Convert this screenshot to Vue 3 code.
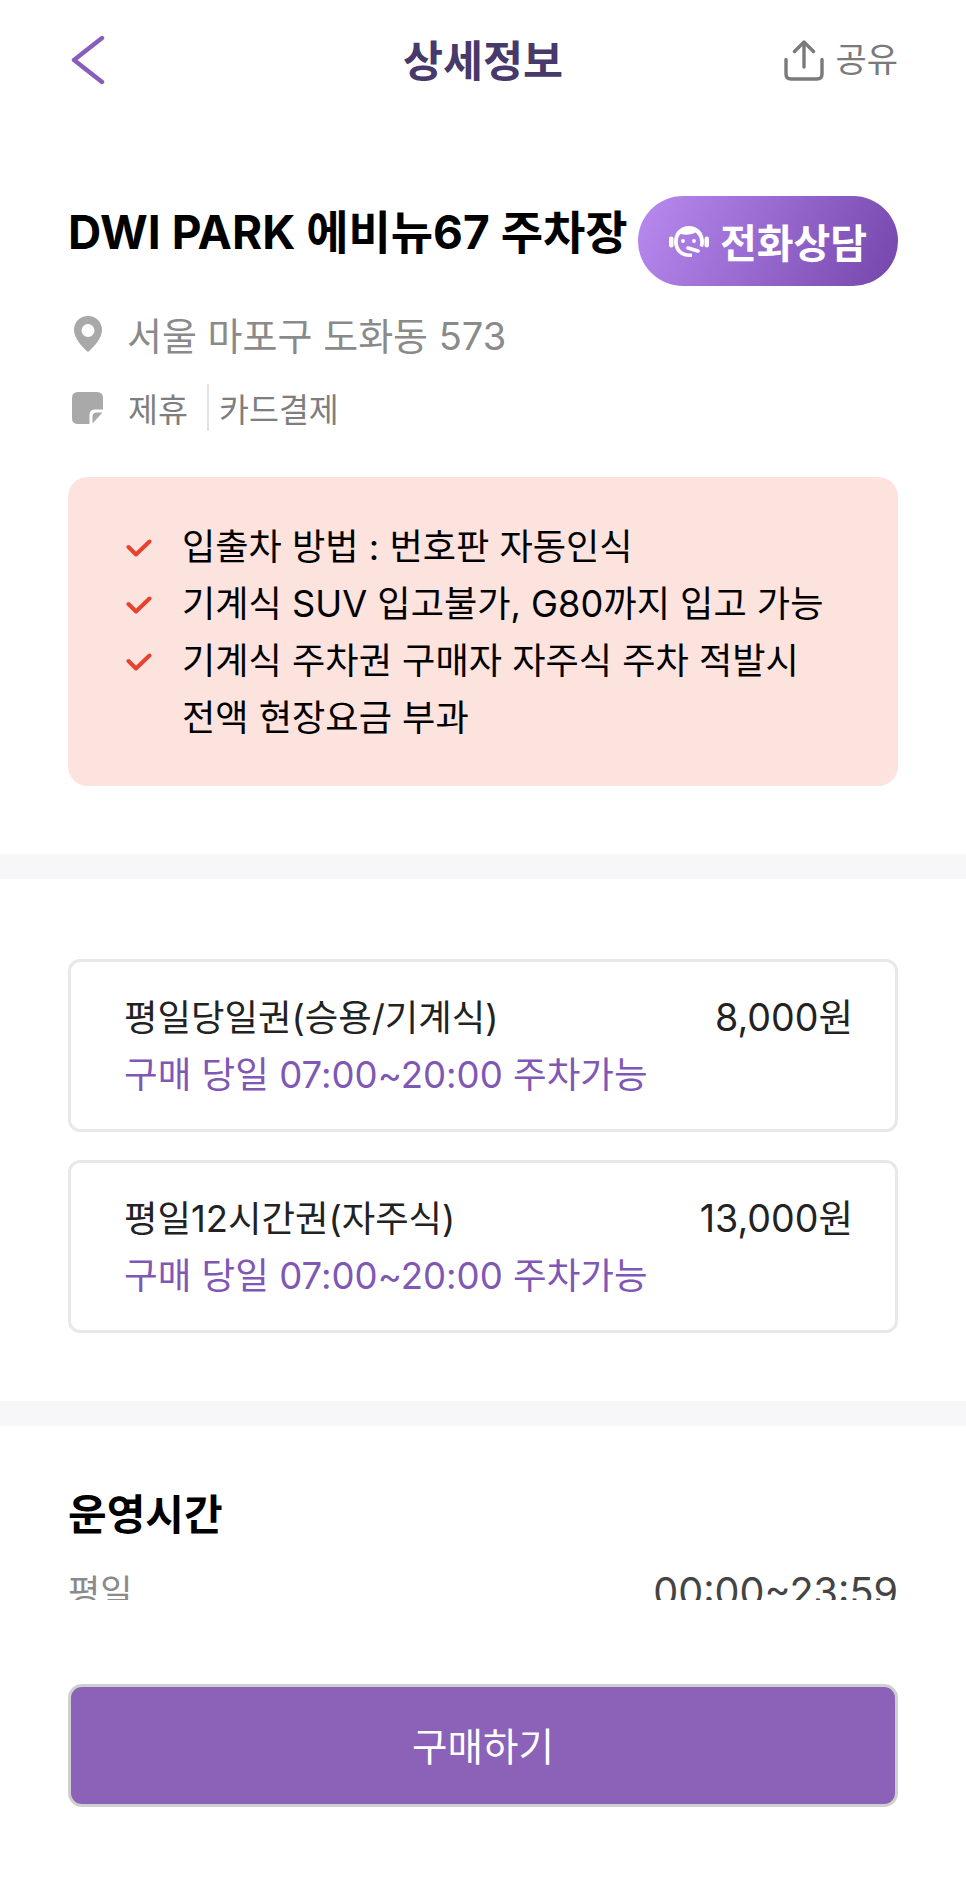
<template>
  <div class="page">
    <header class="top-bar">
      <button class="back-btn" aria-label="뒤로">
        <svg width="36" height="50" viewBox="0 0 36 50" fill="none">
          <path d="M32 3 L4 25 L32 47" stroke="#875cbc" stroke-width="4.4" stroke-linecap="round" stroke-linejoin="round" />
        </svg>
      </button>
      <h1 class="top-title">상세정보</h1>
      <div class="share">
        <svg width="40" height="41" viewBox="0 0 40 41" fill="none">
          <path d="M20 27 V2.5 M10.5 11.5 L20 2 L29.5 11.5" stroke="#7a7a7a" stroke-width="3.4" stroke-linecap="round" stroke-linejoin="round" />
          <path d="M2 19.5 V34 Q2 39 7 39 H33 Q38 39 38 34 V19.5" stroke="#7a7a7a" stroke-width="3.4" stroke-linecap="round" />
        </svg>
        <span>공유</span>
      </div>
    </header>

    <main class="scroll">
      <section class="summary">
        <div class="name-row">
          <h2 class="name">DWI PARK 에비뉴67 주차장</h2>
          <button class="call-btn">
            <svg width="40" height="33" viewBox="0 0 40 33" fill="none">
              <path fill="#fff" fill-rule="evenodd" d="M20 1 C11 1 5 8 5 16.5 C5 25 11 32 20 32 L23 32 L23 28.5 L20 28.5 C13.5 28.5 8.8 23.5 8.8 17 C8.8 13.5 9.5 11 11.5 9 C16 10.4 22 10 26.5 7.6 C29.5 10 31 13 31.2 17 C31.2 19 31 20 30.5 21 L34 22 C34.7 20.4 35 18.5 35 16.5 C35 8 29 1 20 1 Z" />
              <rect x="0" y="11.5" width="4.5" height="11" rx="2.2" fill="#fff" />
              <rect x="35.5" y="11.5" width="4.5" height="11" rx="2.2" fill="#fff" />
              <circle cx="14" cy="16" r="1.9" fill="#fff" />
              <circle cx="25" cy="16" r="1.9" fill="#fff" />
              <path d="M19 23 L29 26" stroke="#fff" stroke-width="3.6" stroke-linecap="round" />
            </svg>
            <span>전화상담</span>
          </button>
        </div>

        <div class="address">
          <svg width="28" height="36" viewBox="0 0 28 36">
            <path fill="#a9a9a9" fill-rule="evenodd" d="M14 0 C6 0 0 6 0 14 C0 22 8 31 14 36 C20 31 28 22 28 14 C28 6 22 0 14 0 Z M14 8 A6.5 6.5 0 1 1 14 21 A6.5 6.5 0 0 1 14 8 Z" />
          </svg>
          <span>서울 마포구 도화동 573</span>
        </div>

        <div class="tags">
          <svg width="32" height="32" viewBox="0 0 32 32">
            <path fill="#a9a9a9" d="M6 0 H25 Q31 0 31 6 V17.5 H23 Q17.5 17.5 17.5 23 V32 H6 Q0 32 0 26 V6 Q0 0 6 0 Z" />
            <path fill="#a9a9a9" d="M20.5 31.5 V24.5 Q20.5 20.5 24.5 20.5 H30.5 Z" />
          </svg>
          <span class="tag">제휴</span>
          <span class="tag tag-next">카드결제</span>
        </div>

        <ul class="notice">
          <li v-for="note in notes" :key="note">
            <svg class="check" width="26" height="18" viewBox="0 0 26 18" fill="none">
              <path d="M2.5 8 L10 15.5 L23.5 2.5" stroke="#e5432d" stroke-width="4" stroke-linecap="round" stroke-linejoin="round" />
            </svg>
            <span>{{ note }}</span>
          </li>
        </ul>
      </section>

      <div class="divider"></div>

      <section class="tickets">
        <div v-for="ticket in tickets" :key="ticket.name" class="ticket">
          <div class="ticket-top">
            <span>{{ ticket.name }}</span>
            <span class="ticket-price">{{ ticket.price }}</span>
          </div>
          <div class="ticket-time">구매 당일 07:00~20:00 주차가능</div>
        </div>
      </section>

      <div class="divider"></div>

      <section class="hours">
        <h3>운영시간</h3>
        <div class="hours-row">
          <span class="hours-day">평일</span>
          <span class="hours-time">00:00~23:59</span>
        </div>
      </section>
    </main>

    <footer class="bottom">
      <button class="buy-btn">구매하기</button>
    </footer>
  </div>
</template>

<script setup>
const notes = [
  "입출차 방법 : 번호판 자동인식",
  "기계식 SUV 입고불가, G80까지 입고 가능",
  "기계식 주차권 구매자 자주식 주차 적발시\n전액 현장요금 부과"
];

const tickets = [
  { name: "평일당일권(승용/기계식)", price: "8,000원" },
  { name: "평일12시간권(자주식)", price: "13,000원" }
];
</script>

<style>
body {
  margin: 0;
  background: #fff;
}
</style>

<style scoped>
.page {
  width: 966px;
  height: 1881px;
  overflow: hidden;
  background: #fff;
  font-family: Inter, "Noto Sans CJK KR", sans-serif;
  display: flex;
  flex-direction: column;
}

.top-bar {
  height: 120px;
  padding: 0 68px 0 70px;
  display: flex;
  align-items: center;
  justify-content: space-between;
  position: relative;
  box-sizing: border-box;
}

.back-btn {
  border: 0;
  padding: 0;
  background: none;
  display: flex;
}

.top-title {
  position: absolute;
  left: 0;
  right: 0;
  top: 31px;
  margin: 0;
  text-align: center;
  font-size: 43.5px;
  line-height: 60px;
  font-weight: 700;
  color: #47396a;
}

.share {
  display: flex;
  align-items: center;
  gap: 11px;
  font-size: 34px;
  line-height: 40px;
  color: #7a7a7a;
}

.summary {
  padding: 76px 68px 68px;
}

.name-row {
  display: flex;
  align-items: center;
  justify-content: space-between;
}

.name {
  margin: 0 0 18px;
  font-size: 46px;
  line-height: 56px;
  font-weight: 700;
  color: #000;
  white-space: nowrap;
}

.call-btn {
  width: 260px;
  height: 90px;
  flex: none;
  border: 0;
  border-radius: 45px;
  background: linear-gradient(115deg, #b98bf0 0%, #7445ab 100%);
  color: #fff;
  font-family: inherit;
  font-size: 40px;
  font-weight: 700;
  display: flex;
  align-items: center;
  justify-content: center;
  gap: 11px;
  padding: 0;
}

.address {
  margin-top: 20px;
  display: flex;
  align-items: center;
  gap: 25px;
  padding-left: 6px;
  font-size: 38px;
  color: #8a8a8a;
}

.tags {
  margin-top: 23px;
  display: flex;
  align-items: center;
  font-size: 32.6px;
  color: #7e7e7e;
  padding-left: 4px;
}

.tag {
  margin-left: 24px;
}

.tag-next {
  margin-left: 19px;
  padding-left: 10px;
  border-left: 2px solid #e2e2e2;
}

.notice {
  list-style: none;
  margin: 46px 0 0;
  padding: 42px 40px 39px 58px;
  background: #fde3de;
  border-radius: 20px;
  font-size: 36.2px;
  line-height: 57px;
  color: #000;
}

.notice li {
  display: flex;
  align-items: flex-start;
  gap: 30px;
  white-space: pre-line;
}

.check {
  flex: none;
  margin-top: 20px;
}

.divider {
  height: 25px;
  background: #f7f7f9;
}

.tickets {
  padding: 80px 68px 68px;
  display: flex;
  flex-direction: column;
  gap: 28px;
}

.ticket {
  height: 173px;
  box-sizing: border-box;
  border: 3px solid #e8e8e8;
  border-radius: 12px;
  padding: 30px 42px 0 53px;
}

.ticket-top {
  display: flex;
  justify-content: space-between;
  font-size: 36.4px;
  line-height: 52px;
  color: #222;
}

.ticket-price {
  font-size: 37.6px;
}

.ticket-time {
  margin-top: 5px;
  font-size: 36.6px;
  line-height: 52px;
  color: #7f57b5;
}

.hours {
  padding: 55px 68px 0;
}

.hours h3 {
  margin: 0;
  font-size: 42px;
  font-weight: 700;
  color: #000;
}

.hours-row {
  margin-top: 26px;
  display: flex;
  justify-content: space-between;
  font-size: 39.6px;
}

.hours-day {
  color: #8a8a8a;
  font-size: 35px;
  margin-top: -4px;
}

.hours-time {
  color: #444;
}

.scroll {
  height: 1480px;
  overflow: hidden;
  flex: none;
}

.bottom {
  flex: 1;
  background: #fff;
  padding: 84px 68px 0;
}

.buy-btn {
  width: 100%;
  height: 123px;
  box-sizing: border-box;
  border: 3px solid #cfcfcf;
  border-radius: 14px;
  background: #8c61b8;
  color: #fff;
  font-family: inherit;
  font-size: 38.6px;
  padding: 0 0 4px;
}
</style>
